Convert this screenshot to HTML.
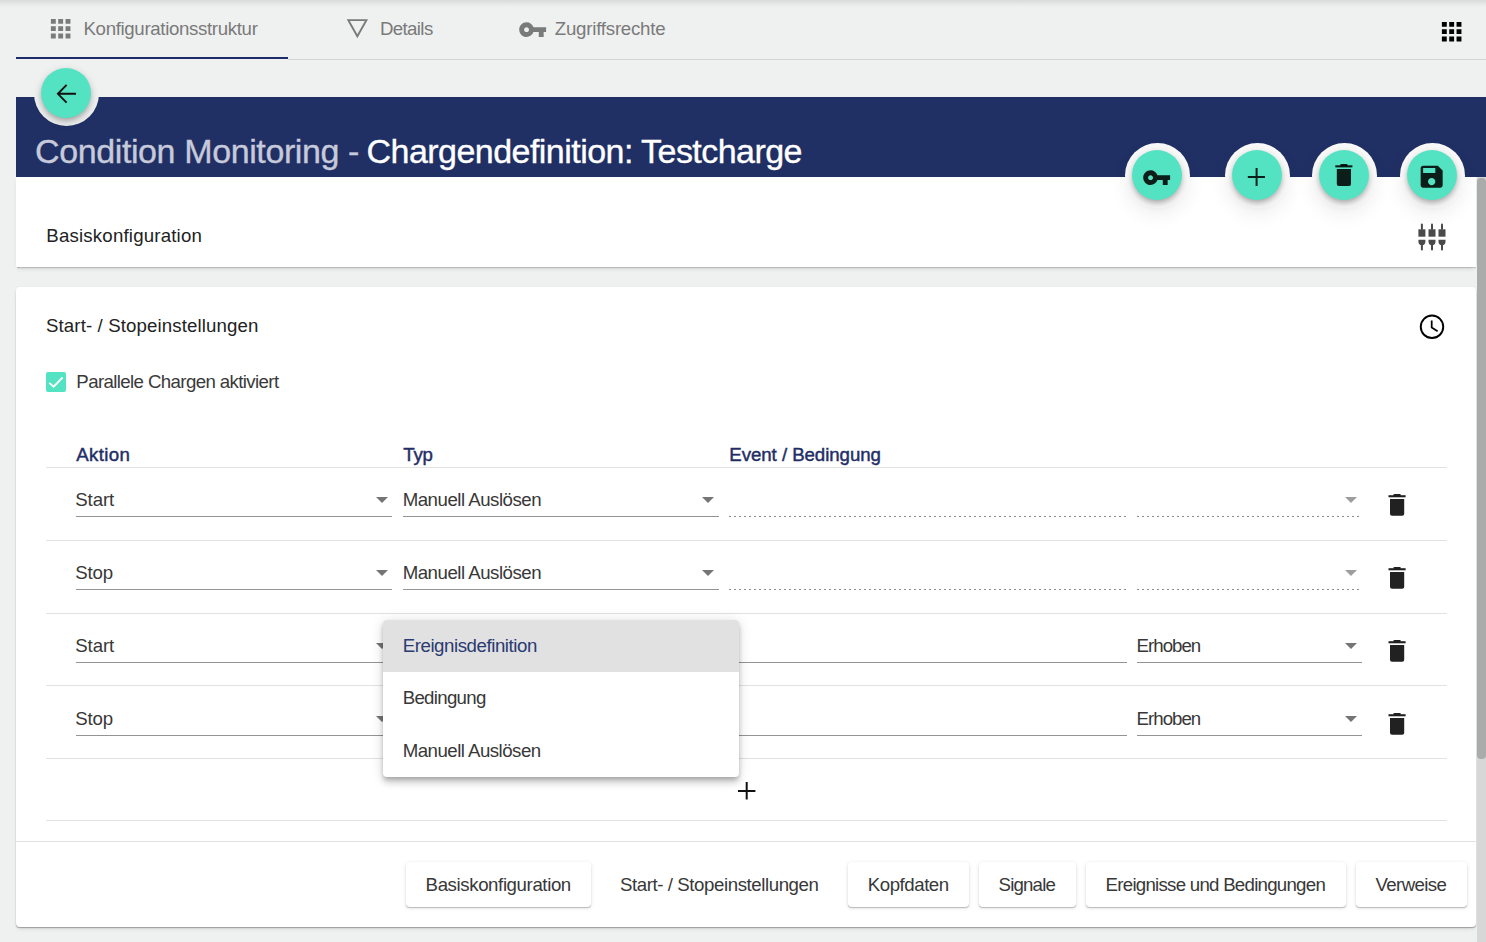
<!DOCTYPE html>
<html><head><meta charset="utf-8">
<style>
*{box-sizing:border-box;margin:0;padding:0}
html,body{width:1486px;height:942px;overflow:hidden;background:#eff1f0;font-family:"Liberation Sans",sans-serif}
body{position:relative}
.t{position:absolute;white-space:nowrap;line-height:1}
.ic{position:absolute;display:block}
.a{position:absolute}
.hr{position:absolute;height:1px;background:#e2e2e2}
.ul{position:absolute;height:1px;background:rgba(0,0,0,.42)}
.dot{position:absolute;height:1px;background-image:linear-gradient(to right,rgba(0,0,0,.45) 0,rgba(0,0,0,.45) 2px,transparent 2px);background-size:5px 1px}
.car{position:absolute;width:0;height:0;border-left:6.2px solid transparent;border-right:6.2px solid transparent;border-top:6.2px solid rgba(0,0,0,.54)}
.car.dis{border-top-color:rgba(0,0,0,.38)}
.halo{position:absolute;border-radius:50%;background:radial-gradient(circle at 50% 50%,#f9f9f9 70%,#f1f1f1 100%);box-shadow:0 8px 18px rgba(0,0,0,.06)}
.fab{position:absolute;width:50px;height:50px;border-radius:50%;background:#53e3c2;box-shadow:0 3px 5px -1px rgba(0,0,0,.2),0 5px 8px 0 rgba(0,0,0,.12),0 1px 10px 0 rgba(0,0,0,.08)}
.btn{position:absolute;top:862px;height:45px;background:#fff;border-radius:4px;box-shadow:0 1.5px 1px -0.5px rgba(0,0,0,.22),0 1px 4px rgba(0,0,0,.12)}
</style></head><body>
<div class="a" style="left:0;top:0;width:1486px;height:7px;background:linear-gradient(rgba(0,0,0,.09),rgba(0,0,0,0))"></div>
<svg class="ic" style="left:46.10px;top:14.10px" width="29.33" height="29.33" viewBox="0 0 24 24"><path d="M4 8h4V4H4v4zm6 12h4v-4h-4v4zm-6 0h4v-4H4v4zm0-6h4v-4H4v4zm6 0h4v-4h-4v4zm6-10v4h4V4h-4zm-6 4h4V4h-4v4zm6 6h4v-4h-4v4zm0 6h4v-4h-4v4z" fill="#7a7a7a"/></svg>
<div class="t" id="t0" style="left:83.50px;top:20.20px;font-size:18.67px;color:#7a7a7a;letter-spacing:-0.338px;">Konfigurationsstruktur</div>
<svg class="a" style="left:330px;top:0" width="50" height="50"><path d="M18.3 20.1 H36.4 L27.35 36.3 Z" fill="none" stroke="#7a7a7a" stroke-width="1.9" stroke-linejoin="miter"/></svg>
<div class="t" id="t1" style="left:379.90px;top:20.00px;font-size:18.67px;color:#7a7a7a;letter-spacing:-0.617px;">Details</div>
<svg class="ic" style="left:517.70px;top:14.50px" width="29.33" height="29.33" viewBox="0 0 24 24"><path d="M12.65 10C11.83 7.67 9.61 6 7 6c-3.31 0-6 2.69-6 6s2.69 6 6 6c2.61 0 4.83-1.67 5.65-4H17v4h4v-4h2v-4H12.65zM7 14c-1.1 0-2-.9-2-2s.9-2 2-2 2 .9 2 2-.9 2-2 2z" fill="#7a7a7a"/></svg>
<div class="t" id="t2" style="left:554.80px;top:19.90px;font-size:18.67px;color:#7a7a7a;letter-spacing:-0.223px;">Zugriffsrechte</div>
<div class="a" style="left:288px;top:59px;width:1198px;height:1px;background:#d3d5d4"></div>
<div class="a" style="left:16px;top:57px;width:272px;height:2px;background:#1e2d69"></div>
<svg class="ic" style="left:1436.80px;top:17.20px" width="29.33" height="29.33" viewBox="0 0 24 24"><path d="M4 8h4V4H4v4zm6 12h4v-4h-4v4zm-6 0h4v-4H4v4zm0-6h4v-4H4v4zm6 0h4v-4h-4v4zm6-10v4h4V4h-4zm-6 4h4V4h-4v4zm6 6h4v-4h-4v4zm0 6h4v-4h-4v4z" fill="#000"/></svg>
<div class="a" style="left:16px;top:97px;width:1470px;height:80px;background:#213064"></div>
<div class="t" id="t3" style="left:35.00px;top:133.82px;font-size:34px;color:#c6cadb;letter-spacing:-0.390px;-webkit-text-stroke:0.35px #c6cadb;">Condition Monitoring -</div>
<div class="t" id="t4" style="left:366.60px;top:133.82px;font-size:34px;color:#ffffff;letter-spacing:-0.543px;-webkit-text-stroke:0.35px #fff;">Chargendefinition: Testcharge</div>
<div class="a" style="left:16px;top:177px;width:1460px;height:90px;background:#fff;box-shadow:0 1.5px 1px -0.5px rgba(0,0,0,.3),0 3px 5px -2px rgba(0,0,0,.15)"></div>
<div class="t" id="t5" style="left:46.30px;top:226.70px;font-size:18.67px;color:#222;letter-spacing:0.182px;">Basiskonfiguration</div>
<svg class="a" style="left:0;top:0" width="1486" height="300" viewBox="0 0 1486 300"><g fill="#4a4a4a"><rect x="1420.90" y="223.4" width="2" height="6.5" rx="1"/><rect x="1418.40" y="229.3" width="7" height="7.4"/><path d="M1418.40 239.8 h7 v1.8 a3.5 3.6 0 0 1 -7 0 z"/><rect x="1420.90" y="243" width="2" height="7.6" rx="1"/><rect x="1431.00" y="223.4" width="2" height="6.5" rx="1"/><rect x="1428.50" y="229.3" width="7" height="7.4"/><path d="M1428.50 239.8 h7 v1.8 a3.5 3.6 0 0 1 -7 0 z"/><rect x="1431.00" y="243" width="2" height="7.6" rx="1"/><rect x="1441.00" y="223.4" width="2" height="6.5" rx="1"/><rect x="1438.50" y="229.3" width="7" height="7.4"/><path d="M1438.50 239.8 h7 v1.8 a3.5 3.6 0 0 1 -7 0 z"/><rect x="1441.00" y="243" width="2" height="7.6" rx="1"/></g></svg>
<div class="a" style="left:16px;top:287px;width:1460px;height:640px;background:#fff;border-radius:4px;box-shadow:0 1.5px 1px -0.5px rgba(0,0,0,.28),0 3px 5px -2px rgba(0,0,0,.15),0 0 3px rgba(0,0,0,.05)"></div>
<div class="t" id="t6" style="left:46.00px;top:316.70px;font-size:18.67px;color:#222;letter-spacing:0.116px;">Start- / Stopeinstellungen</div>
<svg class="a" style="left:1400px;top:300px" width="60" height="60"><g fill="none" stroke="#000"><circle cx="32" cy="26.8" r="11.25" stroke-width="1.95"/><path d="M31.7 20.6 V27.6 L37.6 31.2" stroke-width="1.75"/></g></svg>
<div class="a" style="left:46px;top:372px;width:20px;height:20px;border-radius:2px;background:#53e3c2"></div>
<svg class="a" style="left:46px;top:372px" width="20" height="20" viewBox="0 0 20 20"><path d="M3.3 10.8 L7.6 14.7 L16.6 5.5" fill="none" stroke="#fff" stroke-width="1.8"/></svg>
<div class="t" id="t7" style="left:76.30px;top:373.20px;font-size:18.67px;color:#3a3a3a;letter-spacing:-0.615px;">Parallele Chargen aktiviert</div>
<div class="t" id="t8" style="left:76.20px;top:445.90px;font-size:18.67px;color:#1f2e66;letter-spacing:0.380px;-webkit-text-stroke:0.45px #1f2e66;">Aktion</div>
<div class="t" id="t9" style="left:403.30px;top:446.10px;font-size:18.67px;color:#1f2e66;letter-spacing:-0.200px;-webkit-text-stroke:0.45px #1f2e66;">Typ</div>
<div class="t" id="t10" style="left:729.30px;top:445.80px;font-size:18.67px;color:#1f2e66;letter-spacing:-0.050px;-webkit-text-stroke:0.45px #1f2e66;">Event / Bedingung</div>
<div class="hr" style="left:46px;top:467px;width:1401px"></div>
<div class="hr" style="left:46px;top:540px;width:1401px"></div>
<div class="hr" style="left:46px;top:613px;width:1401px"></div>
<div class="hr" style="left:46px;top:685px;width:1401px"></div>
<div class="hr" style="left:46px;top:758px;width:1401px"></div>
<div class="hr" style="left:46px;top:820px;width:1401px"></div>
<div class="hr" style="left:16px;top:841px;width:1460px"></div>
<div class="t" id="t11" style="left:75.30px;top:491.30px;font-size:18.67px;color:#383838;letter-spacing:-0.125px;">Start</div>
<div class="ul" style="left:76px;top:516px;width:316px"></div>
<div class="car" style="left:375.5px;top:497px"></div>
<div class="t" id="t12" style="left:402.70px;top:490.80px;font-size:18.67px;color:#383838;letter-spacing:-0.493px;">Manuell Auslösen</div>
<div class="ul" style="left:403px;top:516px;width:316px"></div>
<div class="car" style="left:702px;top:497px"></div>
<div class="dot" style="left:729px;top:516px;width:398px"></div>
<div class="dot" style="left:1137px;top:516px;width:222px"></div>
<div class="car dis" style="left:1345px;top:497px"></div>
<svg class="a" style="left:1386px;top:491px" width="26" height="30"><g fill="#212121" transform="translate(2.50 2.90)"><rect x="4.9" y="0" width="7.4" height="2.2" rx="1"/><rect x="0" y="1.3" width="17.1" height="2.1"/><path d="M1.5 5.1 H15.7 V19.9 a2 2 0 0 1 -2 2 H3.5 a2 2 0 0 1 -2 -2 Z"/></g></svg>
<div class="t" id="t13" style="left:75.30px;top:564.30px;font-size:18.67px;color:#383838;letter-spacing:-0.167px;">Stop</div>
<div class="ul" style="left:76px;top:589px;width:316px"></div>
<div class="car" style="left:375.5px;top:570px"></div>
<div class="t" id="t14" style="left:402.70px;top:563.80px;font-size:18.67px;color:#383838;letter-spacing:-0.493px;">Manuell Auslösen</div>
<div class="ul" style="left:403px;top:589px;width:316px"></div>
<div class="car" style="left:702px;top:570px"></div>
<div class="dot" style="left:729px;top:589px;width:398px"></div>
<div class="dot" style="left:1137px;top:589px;width:222px"></div>
<div class="car dis" style="left:1345px;top:570px"></div>
<svg class="a" style="left:1386px;top:564px" width="26" height="30"><g fill="#212121" transform="translate(2.50 2.90)"><rect x="4.9" y="0" width="7.4" height="2.2" rx="1"/><rect x="0" y="1.3" width="17.1" height="2.1"/><path d="M1.5 5.1 H15.7 V19.9 a2 2 0 0 1 -2 2 H3.5 a2 2 0 0 1 -2 -2 Z"/></g></svg>
<div class="t" id="t15" style="left:75.30px;top:637.30px;font-size:18.67px;color:#383838;letter-spacing:-0.125px;">Start</div>
<div class="ul" style="left:76px;top:662px;width:316px"></div>
<div class="car" style="left:375.5px;top:643px"></div>
<div class="ul" style="left:403px;top:662px;width:316px"></div>
<div class="car" style="left:702px;top:643px"></div>
<div class="ul" style="left:729px;top:662px;width:398px"></div>
<div class="ul" style="left:1137px;top:662px;width:225px"></div>
<div class="t" id="t16" style="left:1136.60px;top:637.30px;font-size:18.67px;color:#383838;letter-spacing:-0.983px;">Erhoben</div>
<div class="car" style="left:1345px;top:643px"></div>
<svg class="a" style="left:1386px;top:637px" width="26" height="30"><g fill="#212121" transform="translate(2.50 2.90)"><rect x="4.9" y="0" width="7.4" height="2.2" rx="1"/><rect x="0" y="1.3" width="17.1" height="2.1"/><path d="M1.5 5.1 H15.7 V19.9 a2 2 0 0 1 -2 2 H3.5 a2 2 0 0 1 -2 -2 Z"/></g></svg>
<div class="t" id="t17" style="left:75.30px;top:710.30px;font-size:18.67px;color:#383838;letter-spacing:-0.167px;">Stop</div>
<div class="ul" style="left:76px;top:735px;width:316px"></div>
<div class="car" style="left:375.5px;top:716px"></div>
<div class="ul" style="left:403px;top:735px;width:316px"></div>
<div class="car" style="left:702px;top:716px"></div>
<div class="ul" style="left:729px;top:735px;width:398px"></div>
<div class="ul" style="left:1137px;top:735px;width:225px"></div>
<div class="t" id="t18" style="left:1136.60px;top:710.30px;font-size:18.67px;color:#383838;letter-spacing:-0.983px;">Erhoben</div>
<div class="car" style="left:1345px;top:716px"></div>
<svg class="a" style="left:1386px;top:710px" width="26" height="30"><g fill="#212121" transform="translate(2.50 2.90)"><rect x="4.9" y="0" width="7.4" height="2.2" rx="1"/><rect x="0" y="1.3" width="17.1" height="2.1"/><path d="M1.5 5.1 H15.7 V19.9 a2 2 0 0 1 -2 2 H3.5 a2 2 0 0 1 -2 -2 Z"/></g></svg>
<svg class="a" style="left:730px;top:774px" width="34" height="34"><path d="M8 17 H25.4 M16.7 8 V25.6" fill="none" stroke="#111" stroke-width="2"/></svg>
<div class="btn" style="left:406px;width:185px"></div>
<div class="t" id="t19" style="left:425.60px;top:876.00px;font-size:18.67px;color:#383838;letter-spacing:-0.400px;">Basiskonfiguration</div>
<div class="btn" style="left:848.2px;width:120.59999999999991px"></div>
<div class="t" id="t20" style="left:867.80px;top:876.00px;font-size:18.67px;color:#383838;letter-spacing:-0.463px;">Kopfdaten</div>
<div class="btn" style="left:979px;width:96.5px"></div>
<div class="t" id="t21" style="left:998.60px;top:876.00px;font-size:18.67px;color:#383838;letter-spacing:-0.833px;">Signale</div>
<div class="btn" style="left:1086px;width:259.5px"></div>
<div class="t" id="t22" style="left:1105.60px;top:876.00px;font-size:18.67px;color:#383838;letter-spacing:-0.736px;">Ereignisse und Bedingungen</div>
<div class="btn" style="left:1356px;width:110.5px"></div>
<div class="t" id="t23" style="left:1375.60px;top:876.00px;font-size:18.67px;color:#383838;letter-spacing:-0.643px;">Verweise</div>
<div class="t" id="t24" style="left:620.00px;top:876.20px;font-size:18.67px;color:#383838;letter-spacing:-0.424px;">Start- / Stopeinstellungen</div>
<div class="a" style="left:1477px;top:177px;width:9px;height:765px;background:#d7d7d7"></div>
<div class="a" style="left:1477px;top:178px;width:9px;height:581px;background:#aaacab;border-radius:4px"></div>
<div class="halo" style="left:33.50px;top:60.50px;width:65px;height:65px;background:#eff1f0;box-shadow:none"></div>
<div class="fab" style="left:41.00px;top:68.00px"></div>
<svg class="a" style="left:0;top:0" width="120" height="120"><path d="M66.6 84.9 L57.9 93.8 L66.6 102.7 M58 93.8 H76" fill="none" stroke="#111" stroke-width="1.9"/></svg>
<div class="halo" style="left:1124.50px;top:142.50px;width:65px;height:65px;"></div>
<div class="fab" style="left:1132.00px;top:150.00px"></div>
<svg class="ic" style="left:1141.80px;top:162.70px" width="29.33" height="29.33" viewBox="0 0 24 24"><path d="M12.65 10C11.83 7.67 9.61 6 7 6c-3.31 0-6 2.69-6 6s2.69 6 6 6c2.61 0 4.83-1.67 5.65-4H17v4h4v-4h2v-4H12.65zM7 14c-1.1 0-2-.9-2-2s.9-2 2-2 2 .9 2 2-.9 2-2 2z" fill="rgba(0,0,0,.87)"/></svg>
<div class="halo" style="left:1224.50px;top:142.50px;width:65px;height:65px;"></div>
<div class="fab" style="left:1232.00px;top:150.00px"></div>
<svg class="a" style="left:1240px;top:160px" width="34" height="34"><path d="M7.8 17 H25 M16.6 8.1 V25.9" fill="none" stroke="rgba(0,0,0,.87)" stroke-width="2"/></svg>
<div class="halo" style="left:1311.50px;top:142.50px;width:65px;height:65px;"></div>
<div class="fab" style="left:1319.00px;top:150.00px"></div>
<svg class="a" style="left:1333px;top:162px" width="26" height="30"><g fill="rgba(0,0,0,.87)" transform="translate(2.30 2.00)"><rect x="4.9" y="0" width="7.4" height="2.2" rx="1"/><rect x="0" y="1.3" width="17.1" height="2.1"/><path d="M1.5 5.1 H15.7 V19.9 a2 2 0 0 1 -2 2 H3.5 a2 2 0 0 1 -2 -2 Z"/></g></svg>
<div class="halo" style="left:1399.50px;top:142.50px;width:65px;height:65px;"></div>
<div class="fab" style="left:1407.00px;top:150.00px"></div>
<svg class="ic" style="left:1416.60px;top:162.20px" width="29.33" height="29.33" viewBox="0 0 24 24"><path d="M17 3H5c-1.11 0-2 .9-2 2v14c0 1.1.89 2 2 2h14c1.1 0 2-.9 2-2V7l-4-4zm-5 16c-1.66 0-3-1.34-3-3s1.34-3 3-3 3 1.34 3 3-1.34 3-3 3zm3-10H5V5h10v4z" fill="rgba(0,0,0,.87)"/></svg>
<div class="a" style="left:383px;top:620px;width:356px;height:156.5px;background:#fff;border-radius:4px;overflow:hidden;box-shadow:0 2.6px 4px -1.3px rgba(0,0,0,.2),0 5.3px 6.6px 0 rgba(0,0,0,.14),0 1.3px 13.3px 0 rgba(0,0,0,.12)"><div style="height:51.5px;background:#e1e1e1"></div></div>
<div class="t" id="t25" style="left:402.70px;top:636.60px;font-size:18.67px;color:#2a3a72;letter-spacing:-0.441px;">Ereignisdefinition</div>
<div class="t" id="t26" style="left:402.70px;top:689.00px;font-size:18.67px;color:#383838;letter-spacing:-0.700px;">Bedingung</div>
<div class="t" id="t27" style="left:402.70px;top:742.00px;font-size:18.67px;color:#383838;letter-spacing:-0.520px;">Manuell Auslösen</div>
</body></html>
